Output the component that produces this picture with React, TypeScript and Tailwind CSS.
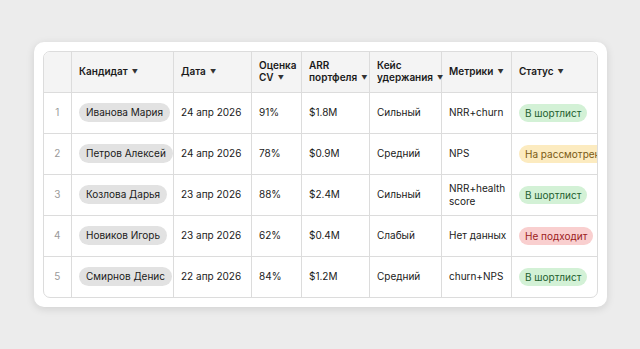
import React from "react";

type Row = {
  n: number;
  name: string;
  date: string;
  cv: string;
  arr: string;
  keis: string;
  metrics: React.ReactNode;
  status: "ok" | "wait" | "no";
};

const rows: Row[] = [
  { n: 1, name: "Иванова Мария", date: "24 апр 2026", cv: "91%", arr: "$1.8M", keis: "Сильный", metrics: "NRR+churn", status: "ok" },
  { n: 2, name: "Петров Алексей", date: "24 апр 2026", cv: "78%", arr: "$0.9M", keis: "Средний", metrics: "NPS", status: "wait" },
  { n: 3, name: "Козлова Дарья", date: "23 апр 2026", cv: "88%", arr: "$2.4M", keis: "Сильный", metrics: <>NRR+health<br />score</>, status: "ok" },
  { n: 4, name: "Новиков Игорь", date: "23 апр 2026", cv: "62%", arr: "$0.4M", keis: "Слабый", metrics: "Нет данных", status: "no" },
  { n: 5, name: "Смирнов Денис", date: "22 апр 2026", cv: "84%", arr: "$1.2M", keis: "Средний", metrics: "churn+NPS", status: "ok" },
];

function Status({ s }: { s: Row["status"] }) {
  const base = "inline-block whitespace-nowrap rounded-full px-[6px] py-[3px] leading-[12px]";
  if (s === "ok") return <span className={base + " bg-[#d3f1d6] text-[#24602f]"}>В шортлист</span>;
  if (s === "wait") return <span className={base + " bg-[#fcebc0] text-[#7a5a14]"}>На рассмотрении</span>;
  return <span className={base + " bg-[#f9cfcf] text-[#9b1c1c]"}>Не подходит</span>;
}

const Caret = () => <span className="ml-[4px] inline-block align-[1px] text-[6px] text-[#333]">▼</span>;

export default function App() {
  const th = "border-l border-[#dcdcdc] px-[7px] text-left align-middle font-semibold leading-[12px] whitespace-nowrap";
  const td = "border-l border-t border-[#dcdcdc] px-[7px] align-middle leading-[13px] whitespace-nowrap";
  return (
    <div
      className="flex h-[349px] w-[640px] items-center justify-center bg-[#ececec] text-[10px] text-[#1a1a1a]"
      style={{ fontFamily: "Inter, 'Noto Sans', sans-serif" }}
    >
      <div className="rounded-[10px] bg-white p-[9px] shadow-[0_2px_8px_rgba(0,0,0,0.12)]">
        <div className="w-[555px] overflow-hidden rounded-[7px] border border-[#dcdcdc]">
          <table className="table-fixed border-collapse" style={{ width: 600 }}>
            <colgroup>
              <col className="w-[28px]" />
              <col className="w-[102px]" />
              <col className="w-[78px]" />
              <col className="w-[50px]" />
              <col className="w-[68px]" />
              <col className="w-[72px]" />
              <col className="w-[70px]" />
              <col className="w-[132px]" />
            </colgroup>
            <thead>
              <tr className="h-[40px] bg-[#f4f4f4]">
                <th className="px-0"></th>
                <th className={th}>Кандидат<Caret /></th>
                <th className={th}>Дата<Caret /></th>
                <th className={th}>Оценка<br />CV<Caret /></th>
                <th className={th}>ARR<br />портфеля<Caret /></th>
                <th className={th}>Кейс<br />удержания<Caret /></th>
                <th className={th}>Метрики<Caret /></th>
                <th className={th}>Статус<Caret /></th>
              </tr>
            </thead>
            <tbody>
              {rows.map((r) => (
                <tr key={r.n} className="h-[41px]">
                  <td className="border-t border-[#dcdcdc] text-center text-[#9a9a9a]">{r.n}</td>
                  <td className={td}>
                    <span className="inline-block whitespace-nowrap rounded-full bg-[#e2e2e2] px-[7px] py-[3px] leading-[13px]">{r.name}</span>
                  </td>
                  <td className={td}>{r.date}</td>
                  <td className={td}>{r.cv}</td>
                  <td className={td}>{r.arr}</td>
                  <td className={td}>{r.keis}</td>
                  <td className={td}>{r.metrics}</td>
                  <td className={td}><Status s={r.status} /></td>
                </tr>
              ))}
            </tbody>
          </table>
        </div>
      </div>
    </div>
  );
}
